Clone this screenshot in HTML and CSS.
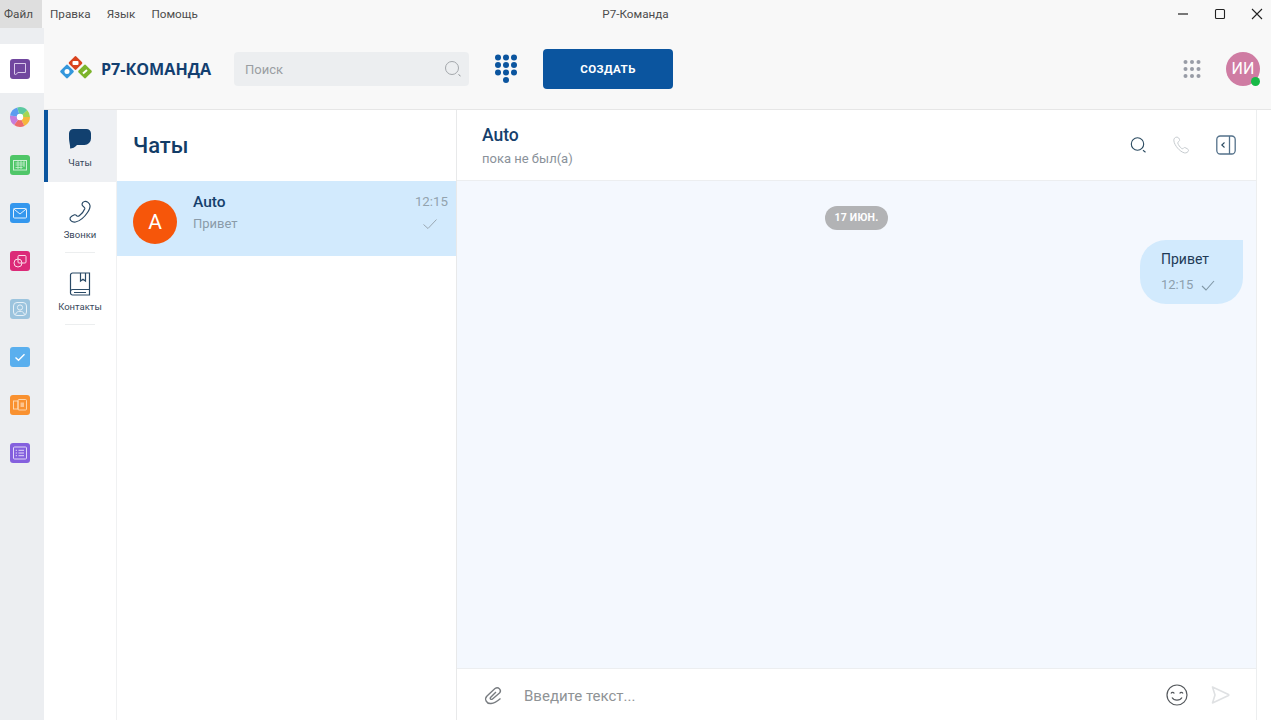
FILE: index.html
```html
<!DOCTYPE html>
<html lang="ru">
<head>
<meta charset="utf-8">
<title>Р7-Команда</title>
<link rel="stylesheet" href="styles.css">
</head>
<body>
<div class="app">
  <div class="titlebar">
    <div class="menu">
      <span class="menu-item active">Файл</span>
      <span class="menu-item">Правка</span>
      <span class="menu-item">Язык</span>
      <span class="menu-item">Помощь</span>
    </div>
    <div class="window-title">Р7-Команда</div>
    <div class="window-controls">
      <svg width="14" height="14" viewBox="0 0 14 14"><path d="M2 7h10" stroke="#222" stroke-width="1.2"/></svg>
      <svg width="14" height="14" viewBox="0 0 14 14"><rect x="2.5" y="2.5" width="9" height="9" rx="1" fill="none" stroke="#222" stroke-width="1.1"/></svg>
      <svg width="14" height="14" viewBox="0 0 14 14"><path d="M2 2l10 10M12 2L2 12" stroke="#222" stroke-width="1.1"/></svg>
    </div>
  </div>
  <div class="workspace">
    <aside class="rail">
      <div class="rail-item selected"><svg class="app-icon" viewBox="0 0 20 20"><rect width="20" height="20" rx="3" fill="#71479f"/><path d="M4.500 4.500h11v9H8l-2.200 2-1.300-.3z" fill="none" stroke="#d9c9ea" stroke-width="1"/></svg></div>
      <div class="rail-item"><svg class="app-icon" viewBox="0 0 20 20"><circle cx="10" cy="10" r="6.500" fill="none" stroke="#f6b73c" stroke-width="7" stroke-dasharray="7 35" stroke-dashoffset="0"/><circle cx="10" cy="10" r="6.500" fill="none" stroke="#ee6c6c" stroke-width="7" stroke-dasharray="7 35" stroke-dashoffset="-7"/><circle cx="10" cy="10" r="6.500" fill="none" stroke="#c77ddb" stroke-width="7" stroke-dasharray="7 35" stroke-dashoffset="-14"/><circle cx="10" cy="10" r="6.500" fill="none" stroke="#5c9cf0" stroke-width="7" stroke-dasharray="7 35" stroke-dashoffset="-21"/><circle cx="10" cy="10" r="6.500" fill="none" stroke="#5cc9a0" stroke-width="7" stroke-dasharray="7 35" stroke-dashoffset="-28"/><circle cx="10" cy="10" r="6.500" fill="none" stroke="#a5d652" stroke-width="7" stroke-dasharray="7 35" stroke-dashoffset="-35"/><circle cx="10" cy="10" r="3.200" fill="#fff"/></svg></div>
      <div class="rail-item"><svg class="app-icon" viewBox="0 0 20 20"><rect width="20" height="20" rx="3" fill="#4fc668"/><rect x="3.500" y="5.500" width="13" height="9.500" fill="none" stroke="#c9efd2" stroke-width="1"/><path d="M5.500 8h9M5.500 10h9M5.500 12.500h7M8 6v8M11 6v8M14 6v6" stroke="#c9efd2" stroke-width=".8"/></svg></div>
      <div class="rail-item"><svg class="app-icon" viewBox="0 0 20 20"><rect width="20" height="20" rx="3" fill="#3497ee"/><rect x="3.500" y="5.500" width="13" height="9.500" rx="1" fill="none" stroke="#e3f1fd" stroke-width="1"/><path d="M3.800 6l6.200 5 6.200-5" fill="none" stroke="#e3f1fd" stroke-width="1"/></svg></div>
      <div class="rail-item"><svg class="app-icon" viewBox="0 0 20 20"><rect width="20" height="20" rx="3" fill="#dc2a78"/><rect x="8" y="4.500" width="8" height="7.500" rx="1" fill="none" stroke="#fbdce9" stroke-width="1"/><circle cx="8" cy="12" r="4" fill="none" stroke="#fbdce9" stroke-width="1"/></svg></div>
      <div class="rail-item"><svg class="app-icon" viewBox="0 0 20 20"><rect width="20" height="20" rx="3" fill="#9cc4de"/><rect x="3.500" y="3.500" width="13" height="13" rx="3.500" fill="none" stroke="#e7f1f8" stroke-width="1"/><circle cx="10" cy="8.500" r="2.600" fill="none" stroke="#e7f1f8" stroke-width="1"/><path d="M5.500 15.500c.8-2.400 2.300-3.200 4.500-3.200s3.700.8 4.500 3.200" fill="none" stroke="#e7f1f8" stroke-width="1"/></svg></div>
      <div class="rail-item"><svg class="app-icon" viewBox="0 0 20 20"><rect width="20" height="20" rx="3" fill="#5aafee"/><path d="M5.500 10.500l3 2.800 6-6" fill="none" stroke="#fff" stroke-width="1.400"/></svg></div>
      <div class="rail-item"><svg class="app-icon" viewBox="0 0 20 20"><rect width="20" height="20" rx="3" fill="#f99130"/><rect x="3.500" y="6" width="4.500" height="8" fill="none" stroke="#fddcb9" stroke-width=".9"/><rect x="8" y="4.500" width="8.500" height="10.500" rx="1" fill="none" stroke="#fddcb9" stroke-width=".9"/><rect x="10.500" y="7.500" width="3.500" height="4.500" fill="#fdc48e"/></svg></div>
      <div class="rail-item"><svg class="app-icon" viewBox="0 0 20 20"><rect width="20" height="20" rx="3" fill="#8460de"/><rect x="3.500" y="4" width="13" height="12" rx="1" fill="none" stroke="#e2d8f8" stroke-width="1"/><path d="M8.500 7.300h5.500M8.500 10h5.500M8.500 12.700h5.500M5.700 7.300h1.300M5.700 10h1.300M5.700 12.700h1.300" stroke="#e2d8f8" stroke-width="1"/></svg></div>
    </aside>
    <div class="main">
      <header class="topbar">
        <div class="logo">
          <svg class="logo-mark" width="34" height="24" viewBox="0 0 34 24">
            <rect x="2.750" y="9.250" width="10.500" height="10.500" rx="1.500" transform="rotate(45 8 14.500)" fill="#3497dc"/>
            <rect x="11.250" y=".75" width="10.500" height="10.500" rx="1.500" transform="rotate(45 16.500 6)" fill="#d9431e"/>
            <rect x="20.750" y="9.250" width="10.500" height="10.500" rx="1.500" transform="rotate(45 26 14.500)" fill="#7cb32b"/>
            <circle cx="8" cy="14.500" r="2.500" fill="#fff"/><rect x="13.500" y="4" width="6" height="4" rx="1" fill="#fff"/><path d="M24 16.500l4-3.500" stroke="#fff" stroke-width="2"/>
          </svg>
          <span class="logo-text">Р7-КОМАНДА</span>
        </div>
        <div class="search">
          <span>Поиск</span>
          <svg width="18" height="18" viewBox="0 0 18 18"><circle cx="8" cy="8" r="6.500" fill="none" stroke="#a3a7ab" stroke-width="1"/><path d="M14.500 14.500l2 1.500" stroke="#8b8f93" stroke-width="1"/></svg>
        </div>
        <svg class="dialpad" width="24" height="30" viewBox="0 0 24 30">
          <g fill="#0b559f"><circle cx="4" cy="3.500" r="3"/><circle cx="12" cy="3.500" r="3"/><circle cx="20" cy="3.500" r="3"/><circle cx="4" cy="11" r="3"/><circle cx="12" cy="11" r="3"/><circle cx="20" cy="11" r="3"/><circle cx="4" cy="18.500" r="3"/><circle cx="12" cy="18.500" r="3"/><circle cx="20" cy="18.500" r="3"/><circle cx="12" cy="26" r="3"/></g>
        </svg>
        <button class="create">СОЗДАТЬ</button>
        <div class="topbar-right">
          <svg width="18" height="18" viewBox="0 0 18 18"><g fill="#989ca6"><circle cx="2.500" cy="2" r="2"/><circle cx="9" cy="2" r="2"/><circle cx="15.500" cy="2" r="2"/><circle cx="2.500" cy="9" r="2"/><circle cx="9" cy="9" r="2"/><circle cx="15.500" cy="9" r="2"/><circle cx="2.500" cy="16" r="2"/><circle cx="9" cy="16" r="2"/><circle cx="15.500" cy="16" r="2"/></g></svg>
          <div class="user">ИИ<span class="online"></span></div>
        </div>
      </header>
      <div class="content">
        <nav class="tabs">
          <div class="tab current">
            <svg width="24" height="24" viewBox="0 0 24 24"><path d="M5.500 1h13A4.500 4.500 0 0 1 23 5.500v5A6.500 6.500 0 0 1 16.500 17H9C7 19.500 4.500 20.500 2 20.500 2.700 18.500 1 14 1 10V5.500A4.500 4.500 0 0 1 5.500 1z" fill="#11406f"/></svg>
            <span>Чаты</span>
          </div>
          <div class="tab">
            <svg width="24" height="24" viewBox="0 0 24 24"><path d="M16.500 1.500c2.500-.5 5 1.500 5.500 4 .3 2-.8 4.500-2.500 7-3 4.500-7.500 8.500-12 9.500-2.500.3-5-1-5.500-3-.3-1.300.8-2.300 2-3l2.500-1.200c1-.3 1.800.5 2.500 1.200.7.400 1.500.3 2.300-.3 2.500-1.800 4.500-4.500 5.500-7 .2-.8-.2-1.300-.9-1.800-.9-.6-2.100-1.400-1.900-2.700.2-1.200 1-2.400 2.500-2.700z" fill="none" stroke="#2a4a66" stroke-width="1.200"/></svg>
            <span>Звонки</span>
          </div>
          <div class="tab">
            <svg width="24" height="24" viewBox="0 0 24 24"><path d="M2.500 20V3a2 2 0 0 1 2-2h17v22h-17a2 2 0 0 1-2-2zM2.500 19.500a2 2 0 0 1 2-2h17M6 20.500h12M12.500 1v8l2.500-1.800 2.500 1.800V1" fill="none" stroke="#2a4a66" stroke-width="1.200"/></svg>
            <span>Контакты</span>
          </div>
        </nav>
        <section class="chats">
          <h1 class="chats-title">Чаты</h1>
          <div class="chat-row">
            <div class="avatar">А</div>
            <div class="chat-info">
              <div class="chat-name">Auto</div>
              <div class="chat-preview">Привет</div>
            </div>
            <div class="chat-meta">
              <span>12:15</span>
              <svg width="16" height="12" viewBox="0 0 16 12"><path d="M1.500 6.500l4.500 4 8.500-9" fill="none" stroke="#9aa8b3" stroke-width="1"/></svg>
            </div>
          </div>
        </section>
        <section class="conversation">
          <div class="conv-head">
            <div class="conv-who">
              <div class="conv-name">Auto</div>
              <div class="conv-status">пока не был(а)</div>
            </div>
            <div class="conv-actions">
              <svg width="18" height="18" viewBox="0 0 18 18"><circle cx="9.500" cy="8" r="6.200" fill="none" stroke="#2a4a60" stroke-width="1.100"/><path d="M15 14.200l2.500 2" stroke="#2a4a60" stroke-width="1.100"/></svg>
              <svg width="18" height="18" viewBox="0 0 24 24"><path d="M6.500 1.500c-2.500 0-4.500 2-4 5 .7 6 8 14.500 14 16 2.500.5 5-1 5.500-3 .2-1.200-.8-2-2-2.700l-2.500-1.300c-1-.4-1.800.2-2.500 1-.7.600-1.500.6-2.300 0-2.300-1.800-4.200-4.500-5-7-.2-.8.200-1.400 1-1.900.9-.7 1.800-1.500 1.400-2.800-.4-1.200-1.600-3.300-3.600-3.300z" fill="none" stroke="#c3c9cd" stroke-width="1.300"/></svg>
              <svg width="20" height="20" viewBox="0 0 20 20"><rect x=".8" y="1" width="18.400" height="18" rx="3.500" fill="none" stroke="#54718a" stroke-width="1.300"/><path d="M13.500 1v18" stroke="#54718a" stroke-width="1.300"/><path d="M8.500 7.500L5.800 10l2.700 2.500" fill="none" stroke="#2a4a60" stroke-width="1.100"/></svg>
            </div>
          </div>
          <div class="messages">
            <div class="date-badge">17 ИЮН.</div>
            <div class="bubble">
              <div class="bubble-text">Привет</div>
              <div class="bubble-meta"><span>12:15</span><svg width="14" height="11" viewBox="0 0 14 11"><path d="M1 6l4 4 8-9" fill="none" stroke="#8097a6" stroke-width="1.100"/></svg></div>
            </div>
          </div>
          <div class="composer">
            <svg width="20" height="20" viewBox="0 0 20 20"><path d="M13 7l-5.500 5.500c-1 1.200.8 2.500 2 1.500L16.500 8c2.500-2.500-1-7-4.500-4.500L4 11c-3 3-.5 8 4 7.500 3-.3 6-2 9.500-5" fill="none" stroke="#787c80" stroke-width="1.400"/></svg>
            <span class="composer-hint">Введите текст...</span>
            <svg class="smile" width="22" height="22" viewBox="0 0 22 22"><circle cx="11" cy="11" r="10" fill="none" stroke="#55595d" stroke-width="1.200"/><path d="M5 9.500c.7-1.500 2.500-1.500 3.300 0M13.700 9.500c.7-1.500 2.500-1.500 3.300 0M6 13.500c2 3.600 8 3.600 10 0" fill="none" stroke="#55595d" stroke-width="1.200"/></svg>
            <svg width="20" height="20" viewBox="0 0 20 20"><path d="M2.500 2l16 7.500a.6.6 0 0 1 0 1L2.500 18l2.500-8z" fill="none" stroke="#dfe1e3" stroke-width="1.600" stroke-linejoin="round"/></svg>
          </div>
        </section>
      </div>
    </div>
  </div>
</div>
</body>
</html>
```
FILE: styles.css
```css
* { box-sizing: border-box; }
html, body { margin: 0; height: 100%; }
body { font-family: Roboto, "Liberation Sans", sans-serif; background: #fff; overflow: hidden; }
.app { width: 1271px; height: 720px; display: flex; flex-direction: column; }

.titlebar { height: 28px; flex: none; display: flex; align-items: stretch; background: #f8f8f8; position: relative; font-size: 11.700px; color: #4d4d4d; }
.menu { display: flex; }
.menu-item { display: flex; align-items: center; padding: 0 8px; }
.menu-item.active { background: #dedede; width: 42px; padding: 0 0 0 4px; }
.window-title { position: absolute; left: 0; right: 0; top: 0; height: 28px; line-height: 28px; text-align: center; pointer-events: none; }
.window-controls { margin-left: auto; display: flex; align-items: center; gap: 23px; padding-right: 7px; }

.workspace { flex: 1; display: flex; min-height: 0; }
.rail { width: 44px; flex: none; background: #eceef1; padding-top: 16px; display: flex; flex-direction: column; }
.rail-item { height: 48px; display: flex; align-items: center; padding-left: 10px; }
.rail-item.selected { background: #fff; height: 49px; }
.app-icon { width: 20px; height: 20px; display: block; }

.main { flex: 1; min-width: 0; display: flex; flex-direction: column; }
.topbar { height: 82px; flex: none; background: #f8f8f8; border-bottom: 1px solid #e6e6e6; display: flex; align-items: center; padding: 0 11px 0 15px; }
.logo { display: flex; align-items: center; gap: 8px; width: 175px; }
.logo-mark { overflow: visible; }
.logo-text { font-family: "Open Sans", "Noto Sans", sans-serif; font-weight: 700; font-size: 16.100px; color: #133f70; white-space: nowrap; }
.search { width: 235px; height: 34px; background: #eceef0; border-radius: 4px; display: flex; align-items: center; justify-content: space-between; padding: 1px 7px 0 11px; font-size: 13px; color: #9a9ea2; }
.dialpad { margin-left: 25px; }
.create { margin-left: 25px; width: 130px; height: 40px; border: 0; border-radius: 4px; background: #0b559f; color: #fff; font: 700 11.500px Roboto, sans-serif; letter-spacing: .4px; }
.topbar-right { margin-left: auto; display: flex; align-items: center; gap: 25px; }
.user { width: 34px; height: 34px; border-radius: 50%; background: #cf7ca3; color: #fff; font-size: 16px; display: flex; align-items: center; justify-content: center; position: relative; }
.online { position: absolute; right: 0; bottom: 0; width: 9px; height: 9px; border-radius: 50%; background: #18b947; }

.content { flex: 1; min-height: 0; display: flex; }
.tabs { width: 72px; flex: none; background: #fff; display: flex; flex-direction: column; align-items: stretch; }
.tab { height: 72px; padding-top: 18px; display: flex; flex-direction: column; align-items: center; gap: 5px; font-size: 9.500px; color: #37475a; position: relative; }
.tab span { line-height: 12px; }
.tab::after { content: ""; position: absolute; left: 21px; right: 21px; bottom: 1px; border-bottom: 1px solid #eceeef; }
.tab.current { background: #eef0f3; border-left: 4px solid #0b559f; padding-right: 4px; }
.tab.current::after { display: none; }

.chats { width: 340px; flex: none; border-left: 1px solid #f0f1f2; background: #fff; }
.chats-title { margin: 0; height: 71px; padding-left: 16px; font-size: 22px; font-weight: 500; line-height: 72px; color: #123c67; }
.chat-row { height: 75px; background: #d2eafd; display: flex; align-items: flex-start; padding: 11px 8px 0 16px; }
.avatar { width: 44px; height: 44px; margin-top: 8px; border-radius: 50%; background: #f6560a; color: #fff; font-size: 21px; display: flex; align-items: center; justify-content: center; flex: none; }
.chat-info { margin-left: 16px; flex: 1; }
.chat-name { font-size: 15.500px; font-weight: 500; line-height: 20px; color: #153f6c; }
.chat-preview { font-size: 13px; line-height: 20px; margin-top: 2px; color: #8a9ba9; }
.chat-meta { display: flex; flex-direction: column; align-items: flex-end; gap: 6px; font-size: 13.300px; color: #93a3ae; line-height: 20px; }
.chat-meta svg { margin-right: 10px; }

.conversation { flex: 1; min-width: 0; border-left: 1px solid #e8e9ea; border-right: 1px solid #eceeef; margin-right: 14px; display: flex; flex-direction: column; background: #fff; }
.conv-head { height: 71px; flex: none; border-bottom: 1px solid #eceef0; display: flex; align-items: center; justify-content: space-between; padding: 0 20px 0 25px; }
.conv-name { font-size: 17.500px; font-weight: 500; line-height: 22px; color: #153f6c; }
.conv-status { font-size: 13px; line-height: 16px; margin-top: 5px; color: #8a929a; }
.conv-actions { display: flex; align-items: center; gap: 26px; }
.messages { flex: 1; min-height: 0; background: #f4f8fe; display: flex; flex-direction: column; padding: 25px 13px 0; }
.date-badge { align-self: center; height: 24px; line-height: 24px; padding: 0 10px; border-radius: 12px; background: #b2b3b5; color: #fff; font-size: 10.500px; font-weight: 700; letter-spacing: .2px; }
.bubble { align-self: flex-end; margin-top: 10px; width: 103px; height: 64px; background: #d2eafd; border-radius: 26px 0 26px 26px; padding: 10px 20px 10px 21px; }
.bubble-text { font-size: 14px; line-height: 18px; color: #1e3a56; }
.bubble-meta { display: flex; align-items: center; gap: 8px; margin-top: 9px; font-size: 13px; line-height: 16px; color: #8d9fad; }
.composer { height: 52px; flex: none; border-top: 1px solid #eceef0; display: flex; align-items: center; padding: 0 26px; background: #fff; }
.composer-hint { margin-left: 21px; padding-top: 2px; font-size: 15px; color: #8f9396; }
.smile { margin-left: auto; margin-right: 22px; }
```
